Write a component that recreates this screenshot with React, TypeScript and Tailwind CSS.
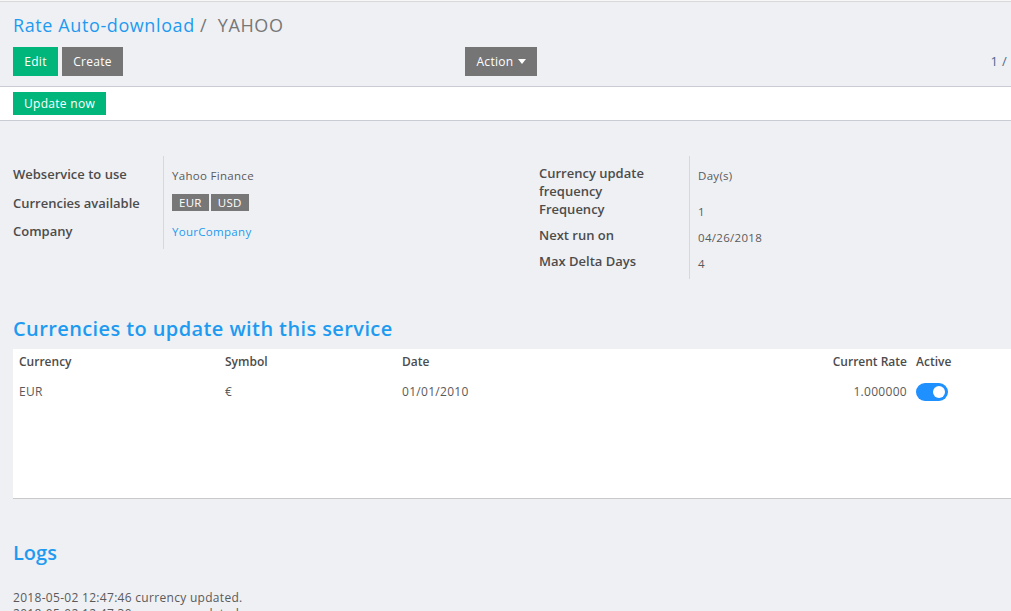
export default function App() {
  const rightFields = [
    { label: "Currency update frequency", value: "Day(s)", h: "h-[36px]" },
    { label: "Frequency", value: "1", h: "h-[26px]" },
    { label: "Next run on", value: "04/26/2018", h: "h-[26px]" },
    { label: "Max Delta Days", value: "4", h: "h-[26px]" },
  ];

  return (
    <div className="min-h-screen w-full bg-[#eff0f4] text-[#4c4c4c] font-['Open_Sans',sans-serif] overflow-hidden">
      {/* remnant of the top bar */}
      <div className="h-[2px] bg-[#f7f7f7] border-b border-[#d9d9d9]" />

      {/* control panel */}
      <div className="px-[13px] pt-[12px]">
        <div className="text-[18px] leading-[22px] tracking-[0.6px]">
          <span className="text-[#1e9bf0]">Rate Auto-download</span>
          <span className="text-[#777777]"> /&nbsp; YAHOO</span>
        </div>
        <div className="flex items-center mt-[11px] h-[29px] text-[12px] tracking-[0.3px]">
          <button className="bg-[#00b67a] text-white h-[29px] w-[45px]">Edit</button>
          <button className="bg-[#757575] text-white h-[29px] w-[61px] ml-[4px]">Create</button>
          <button className="bg-[#757575] text-white h-[29px] w-[72px] ml-[342px] flex items-center justify-center gap-[4px]">
            Action
            <svg width="8" height="5" viewBox="0 0 8 5"><path d="M0 0h8L4 5z" fill="white" /></svg>
          </button>
          <span className="ml-auto mr-[-9px] text-[13px] text-[#4c6a8c]">1 /</span>
        </div>
      </div>

      {/* status bar */}
      <div className="mt-[10px] bg-white border-y border-[#c9ccd2] h-[35px] flex items-center px-[13px]">
        <button className="bg-[#00b67a] text-white text-[12px] tracking-[0.3px] h-[23px] w-[93px]">Update now</button>
      </div>

      {/* form groups */}
      <div className="flex px-[13px] mt-[43px] text-[13px]">
        <div className="flex w-[526px]">
          <div className="w-[150px] flex flex-col font-semibold text-[#4c4c4c]">
            <div className="h-[30px] pt-[1px]">Webservice to use</div>
            <div className="h-[28px]">Currencies available</div>
            <div className="h-[28px]">Company</div>
          </div>
          <div className="border-l border-[#d8d8d8] pl-[8px] flex flex-col text-[11.5px] tracking-[0.3px] mt-[-8px] pt-[9px] h-[93px]">
            <div className="h-[30px] pt-[2px] text-[#5a5a5a]">Yahoo Finance</div>
            <div className="h-[28px]">
              <div className="flex gap-[2px]">
                <span className="bg-[#777777] text-white px-[7px] leading-[17px]">EUR</span>
                <span className="bg-[#777777] text-white px-[7px] leading-[17px]">USD</span>
              </div>
            </div>
            <div className="h-[28px] pt-[1px] text-[#1e9bf0]">YourCompany</div>
          </div>
        </div>
        <div className="flex">
          <div className="w-[150px] flex flex-col font-semibold">
            {rightFields.map((f) => (
              <div key={f.label} className={`${f.h} leading-[18px]`}>
                {f.label}
              </div>
            ))}
          </div>
          <div className="border-l border-[#d8d8d8] pl-[8px] flex flex-col text-[11.5px] tracking-[0.3px] text-[#5a5a5a] mt-[-8px] pt-[9px] h-[123px]">
            {rightFields.map((f) => (
              <div key={f.label} className={`${f.h} pt-[2px]`}>
                {f.value}
              </div>
            ))}
          </div>
        </div>
      </div>

      {/* currencies table */}
      <div className="px-[13px] mt-[38px]">
        <h2 className="text-[20px] leading-[24px] font-semibold tracking-[0.4px] text-[#1e9bf0]">
          Currencies to update with this service
        </h2>
        <div className="mt-[8px] mr-[-13px] bg-white border-b border-[#c9c9c9] h-[150px] text-[12px]">
          <div className="grid grid-cols-[206px_177px_1fr_110px_95px] h-[26px] items-center font-semibold text-[#4c4c4c] pl-[6px]">
            <div>Currency</div>
            <div>Symbol</div>
            <div>Date</div>
            <div className="text-right pr-[9px]">Current Rate</div>
            <div>Active</div>
          </div>
          <div className="grid grid-cols-[206px_177px_1fr_110px_95px] h-[34px] items-center text-[#5a5a5a] tracking-[0.3px] pl-[6px]">
            <div>EUR</div>
            <div>€</div>
            <div>01/01/2010</div>
            <div className="text-right pr-[9px]">1.000000</div>
            <div>
              <div className="w-[32px] h-[18px] rounded-full bg-[#1e90ff] flex items-center justify-end pr-[3px]">
                <div className="w-[12px] h-[12px] rounded-full bg-white" />
              </div>
            </div>
          </div>
        </div>
      </div>

      {/* logs */}
      <div className="px-[13px] mt-[41px]">
        <h2 className="text-[20px] leading-[26px] font-semibold text-[#1e9bf0]">Logs</h2>
        <div className="mt-[24px] text-[12px] leading-[16px] tracking-[0.3px] text-[#5a5a5a]">
          <div>2018-05-02 12:47:46 currency updated.</div>
          <div>2018-05-02 12:47:30 currency updated.</div>
        </div>
      </div>
    </div>
  );
}
